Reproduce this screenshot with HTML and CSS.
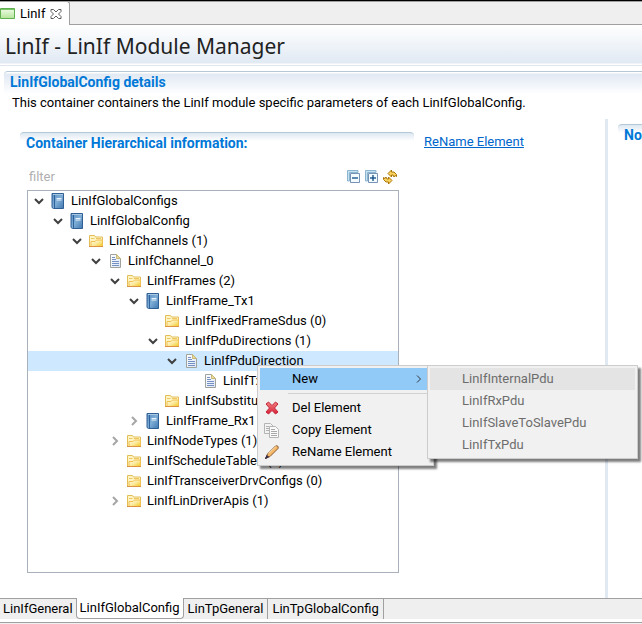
FILE: index.html
```html
<!DOCTYPE html>
<html lang="en">
<head>
<meta charset="utf-8">
<title>LinIf - LinIf Module Manager</title>
<link rel="stylesheet" href="styles.css">
</head>
<body>
<svg class="sprite" aria-hidden="true">
  <defs>
    <linearGradient id="g-folder" x1="0" y1="0" x2="1" y2="1"><stop offset="0" stop-color="#fffbe0"/><stop offset=".5" stop-color="#fbeaa0"/><stop offset="1" stop-color="#f2c61c"/></linearGradient>
    <linearGradient id="g-book" x1="0" y1="0" x2="1" y2="1"><stop offset="0" stop-color="#5b90c4"/><stop offset=".5" stop-color="#7fadd6"/><stop offset="1" stop-color="#3f78b0"/></linearGradient>
    <linearGradient id="g-page" x1="0" y1="0" x2="1" y2="1"><stop offset="0" stop-color="#ffffff"/><stop offset="1" stop-color="#dce6f6"/></linearGradient>
    <linearGradient id="g-green" x1="0" y1="0" x2="0" y2="1"><stop offset="0" stop-color="#f0fbe8"/><stop offset="1" stop-color="#b4e69a"/></linearGradient>
    <linearGradient id="g-red" x1="0" y1="0" x2="0" y2="1"><stop offset="0" stop-color="#f08080"/><stop offset="1" stop-color="#d8203a"/></linearGradient>
  </defs>
  <symbol id="book" viewBox="0 0 16 16">
    <path d="M2 .5h11.500v15H3.500L2 14.500z" fill="url(#g-book)" stroke="#2f5f94"/>
    <path d="M4.500 1v14" stroke="#2d629b" fill="none"/>
    <path d="M3 1.500h10" stroke="#a9c8e4" fill="none"/>
    <path d="M6.500 5.500h5M6.500 7h5" stroke="#e8f2fb" fill="none"/>
  </symbol>
  <symbol id="folder" viewBox="0 0 16 16">
    <path d="M1.500 13.500v-11h5l1 1.500h7v9.500z" fill="#fff4c4" stroke="#e3bd58"/>
    <path d="M3 5.500h3.500M8 5.500h5" stroke="#edc766" fill="none"/>
    <path d="M3 13.500V8.500h4L8.500 7h6v6.500z" fill="url(#g-folder)" stroke="#f0c050"/>
    <path d="M1 13.500h14" stroke="#dd9340" fill="none"/>
  </symbol>
  <symbol id="page" viewBox="0 0 16 16">
    <path d="M3.500 1.500h6l4 4v9h-10z" fill="url(#g-page)" stroke="#a0a39c"/>
    <path d="M9.500 1.500v4h4z" fill="#eadb9c" stroke="#c7b878"/>
    <path d="M5 4.500h3M5 6.500h4M5 8.500h7M5 10.500h7M5 12.500h7" stroke="#7590c2" fill="none"/>
  </symbol>
  <symbol id="open" viewBox="0 0 12 12"><path d="M2 4l4 4 4-4" fill="none" stroke="#404040" stroke-width="2"/></symbol>
  <symbol id="closed" viewBox="0 0 12 12"><path d="M4 2l4 4-4 4" fill="none" stroke="#a6a6a6" stroke-width="2"/></symbol>
  <symbol id="collapse" viewBox="0 0 14 14">
    <path d="M.5 11V.5H11V2.500H2.500V11z" fill="#c6e3f4" stroke="#8db4cf"/>
    <path d="M3.500 3.500h9v9h-9z" fill="#f4fbff" stroke="#7793b6"/><path d="M5 8h6" stroke="#0c4a86" stroke-width="1.300"/>
  </symbol>
</svg>

<header class="editor-tabs">
  <div class="editor-tab">
    <svg class="editor-icon" viewBox="0 0 15 11" aria-hidden="true"><path d="M.5 .5h14v10H.5z" fill="url(#g-green)" stroke="#5fb04e"/><path d="M1 1.500h13" stroke="#7cc46a"/></svg>
    <span>LinIf</span>
    <button class="close" aria-label="Close LinIf"><svg viewBox="0 0 12 12"><path d="M1 1.500h2.500L6 4l2.500-2.500H11v2L8.500 6 11 8.500v2H8.500L6 8l-2.500 2.500H1v-2L3.500 6 1 3.500z" fill="#fff" stroke="#5e5e5e"/></svg></button>
  </div>
</header>

<div class="title-bar"><h1>LinIf - LinIf Module Manager</h1></div>

<section class="details">
  <h2>LinIfGlobalConfig details</h2>
  <p>This container containers the LinIf module specific parameters of each LinIfGlobalConfig.</p>
</section>

<main class="workspace">
  <div class="pane">
    <section class="hierarchy">
      <div class="section-head"><h2>Container Hierarchical information:</h2></div>
      <div class="tools">
        <input type="text" placeholder="filter" aria-label="filter">
        <button aria-label="Collapse all"><svg viewBox="0 0 14 14"><use href="#collapse"/></svg></button>
        <button aria-label="Expand all"><svg viewBox="0 0 14 14"><use href="#collapse"/><path d="M8 5v6" stroke="#0c4a86" stroke-width="1.300"/></svg></button>
        <button aria-label="Refresh"><svg viewBox="0 0 14 14"><path d="M5 3.500L8.500 0v2H11l2.500 2.500v2L12 5.500 11 7 10 5H8.500v2z" fill="#f8d25c" stroke="#a97408" stroke-linejoin="round"/><path d="M9 10.500L5.500 14v-2H3L.5 9.500v-2L2 8.500 3 7l1 2h1.500V7z" fill="#f8d25c" stroke="#a97408" stroke-linejoin="round"/></svg></button>
      </div>
      <ul class="tree">
        <li class="level-0"><button class="twist" aria-label="Collapse"><svg><use href="#open"/></svg></button><svg class="icon"><use href="#book"/></svg><span>LinIfGlobalConfigs</span></li>
        <li class="level-1"><button class="twist" aria-label="Collapse"><svg><use href="#open"/></svg></button><svg class="icon"><use href="#book"/></svg><span>LinIfGlobalConfig</span></li>
        <li class="level-2"><button class="twist" aria-label="Collapse"><svg><use href="#open"/></svg></button><svg class="icon"><use href="#folder"/></svg><span>LinIfChannels (1)</span></li>
        <li class="level-3"><button class="twist" aria-label="Collapse"><svg><use href="#open"/></svg></button><svg class="icon"><use href="#page"/></svg><span>LinIfChannel_0</span></li>
        <li class="level-4"><button class="twist" aria-label="Collapse"><svg><use href="#open"/></svg></button><svg class="icon"><use href="#folder"/></svg><span>LinIfFrames (2)</span></li>
        <li class="level-5"><button class="twist" aria-label="Collapse"><svg><use href="#open"/></svg></button><svg class="icon"><use href="#book"/></svg><span>LinIfFrame_Tx1</span></li>
        <li class="level-6 leaf"><svg class="icon"><use href="#folder"/></svg><span>LinIfFixedFrameSdus (0)</span></li>
        <li class="level-6"><button class="twist" aria-label="Collapse"><svg><use href="#open"/></svg></button><svg class="icon"><use href="#folder"/></svg><span>LinIfPduDirections (1)</span></li>
        <li class="level-7 selected"><button class="twist" aria-label="Collapse"><svg><use href="#open"/></svg></button><svg class="icon"><use href="#page"/></svg><span>LinIfPduDirection</span></li>
        <li class="level-8 leaf"><svg class="icon"><use href="#page"/></svg><span>LinIfTxPdu</span></li>
        <li class="level-6 leaf"><svg class="icon"><use href="#folder"/></svg><span>LinIfSubstitut</span></li>
        <li class="level-5"><button class="twist" aria-label="Expand"><svg><use href="#closed"/></svg></button><svg class="icon"><use href="#book"/></svg><span>LinIfFrame_Rx1</span></li>
        <li class="level-4"><button class="twist" aria-label="Expand"><svg><use href="#closed"/></svg></button><svg class="icon"><use href="#folder"/></svg><span>LinIfNodeTypes (1)</span></li>
        <li class="level-4 leaf"><svg class="icon"><use href="#folder"/></svg><span>LinIfScheduleTables (0)</span></li>
        <li class="level-4 leaf"><svg class="icon"><use href="#folder"/></svg><span>LinIfTransceiverDrvConfigs (0)</span></li>
        <li class="level-4"><button class="twist" aria-label="Expand"><svg><use href="#closed"/></svg></button><svg class="icon"><use href="#folder"/></svg><span>LinIfLinDriverApis (1)</span></li>
      </ul>
    </section>
    <nav class="actions"><a href="#rename">ReName Element</a></nav>
  </div>
  <div class="sash"></div>
  <section class="side"><div class="section-head"><h2>No</h2></div></section>
</main>

<footer class="page-tabs">
  <div class="tab-row">
    <button>LinIfGeneral</button>
    <button class="active">LinIfGlobalConfig</button>
    <button>LinTpGeneral</button>
    <button>LinTpGlobalConfig</button>
  </div>
</footer>

<div class="menu context-menu">
  <button class="current"><span></span><span>New</span><svg class="arrow" viewBox="0 0 6 10"><path d="M1 1.500L4.500 5 1 8.500" fill="none" stroke="#303840"/></svg></button>
  <hr>
  <button><svg viewBox="0 0 16 16"><path d="M2 4l2.500-2L8 5.500 11.500 2 14 4l-3.500 4 3.500 4-2.500 2L8 10.500 4.500 14 2 12l3.500-4z" fill="url(#g-red)" stroke="#c32638" stroke-linejoin="round"/></svg><span>Del Element</span></button>
  <button><svg viewBox="0 0 16 16"><path d="M.5 1.500h6l3 3v7h-9z" fill="#f3f3f3" stroke="#b4b4b4"/><path d="M2 4.500h3M2 6.500h3M2 8.500h3" stroke="#b0b0b0"/><path d="M5.500 4.500h6l3 3v8h-9z" fill="#fafafa" stroke="#b4b4b4"/><path d="M7 7.500h4M7 9.500h6M7 11.500h6M7 13.500h6" stroke="#a8a8a8"/></svg><span>Copy Element</span></button>
  <button><svg viewBox="0 0 16 16"><path d="M1.500 14.500l2-4.500L11.500 2c1.500-1 3.500.5 2.500 2.500L6 12.500z" fill="#f4b765" stroke="#8a5a32" stroke-linejoin="round"/><path d="M4.500 9.500L12 2.500" stroke="#fde0ae"/><path d="M1.500 14.500l1.500-3 1.500 1.500z" fill="#342c4a" stroke="#342c4a"/></svg><span>ReName Element</span></button>
</div>
<div class="menu sub-menu">
  <button class="current"><span></span><span>LinIfInternalPdu</span></button>
  <button><span></span><span>LinIfRxPdu</span></button>
  <button><span></span><span>LinIfSlaveToSlavePdu</span></button>
  <button><span></span><span>LinIfTxPdu</span></button>
</div>
</body>
</html>
```
FILE: styles.css
```css
* { box-sizing: border-box; }

body {
  position: relative;
  display: flex;
  flex-direction: column;
  min-height: 100vh;
  margin: 0;
  overflow: hidden;
  background: #fff;
  color: #000;
  font: 13px/20px Roboto, sans-serif;
}

h1, h2, p, ul { margin: 0; padding: 0; }
button { padding: 0; border: 0; background: none; color: inherit; font: inherit; }
svg { display: block; flex: none; }
.sprite { position: absolute; width: 0; height: 0; }

h2 { color: #0078d7; font: 700 14px/20px Roboto, sans-serif; }

/* editor tab strip */
.editor-tabs {
  height: 25px;
  border-top: 1px solid #000;
  border-bottom: 1px solid #a0a0a0;
  background: #efefef;
  box-shadow: inset 0 1px #a0a0a0;
}
.editor-tab {
  display: flex;
  align-items: center;
  gap: 5px;
  width: 70px;
  height: 24px;
  border-top: 1px solid #a0a0a0;
  border-right: 1px solid #a0a0a0;
  border-radius: 0 3px 0 0;
  background: #fff;
}
.editor-icon { width: 15px; height: 11px; }
.close svg { width: 12px; height: 12px; }

.title-bar {
  height: 41px;
  padding: 7px 5px;
  border-bottom: 1px solid #dfe5ee;
  background: linear-gradient(#fff, #e1e9f3 38px, #fff 39px);
}
h1 { color: #222; font: 400 21px/28px "Noto Sans", sans-serif; }

.details {
  margin: 5px 0 0 4px;
  padding-left: 6px;
  border-top: 1px solid #b4c8d8;
  border-radius: 4px 0 0 0;
  background: linear-gradient(#fff 1px, #e1e9f3 2px, #fff 22px);
}
.details p { padding: 1px 0 0 2px; white-space: nowrap; }

/* panes */
.workspace {
  display: grid;
  flex: 1;
  grid-template-columns: 605fr 3px 34fr;
  margin-top: 6px;
}
.pane { display: flex; padding: 13px 0 25px 20px; }
.sash { background: #e0e8f2; }
.side { padding: 5px 0 0 10px; overflow: hidden; }
.side .section-head { border-radius: 4px 0 0 0; }
.section-head {
  padding-left: 6px;
  border-top: 1px solid #b4c8d8;
  border-radius: 4px 4px 0 0;
  background: linear-gradient(#dde7f1, #fff 8px);
}
.hierarchy { display: flex; flex: 1; flex-direction: column; }
.actions { width: 191px; padding-left: 10px; }
.actions a { color: #0066cc; }

.tools {
  display: flex;
  align-items: center;
  gap: 4px;
  margin: 15px 17px 4px 7px;
}
.tools input {
  flex: 1;
  min-width: 0;
  height: 18px;
  padding: 0 2px;
  border: 0;
  background: none;
  font: inherit;
}
.tools input::placeholder { color: #b0b0b0; }
.tools svg { width: 14px; height: 14px; }

.tree {
  flex: 1;
  margin: 0 15px 0 7px;
  border: 1px solid #a8b0bb;
  list-style: none;
}
.tree li { display: flex; align-items: center; height: 20px; white-space: nowrap; }
.tree .leaf { border-left: 17px solid transparent; }
.tree .selected { background: #cde8ff; }
.twist { width: 12px; margin-right: 5px; }
.twist svg { width: 12px; height: 12px; }
.icon { width: 16px; height: 16px; margin-right: 5px; }
.level-0 { padding-left: 5px; }
.level-1 { padding-left: 24px; }
.level-2 { padding-left: 43px; }
.level-3 { padding-left: 62px; }
.level-4 { padding-left: 81px; }
.level-5 { padding-left: 100px; }
.level-6 { padding-left: 119px; }
.level-7 { padding-left: 138px; }
.level-8 { padding-left: 157px; }

/* bottom page tabs */
.page-tabs { border-bottom: 1px solid #f0f0f0; }
.tab-row {
  display: flex;
  height: 25px;
  border-bottom: 1px solid #a0a0a0;
  background: linear-gradient(#a0a0a0 1px, #efefef 1px, #efefef 21px, #fff 21px);
}
.tab-row button { height: 21px; padding: 0 4px; border-right: 1px solid #a0a0a0; }
.tab-row .active {
  padding: 0 3px;
  border-bottom: 1px solid #a0a0a0;
  border-left: 1px solid #a0a0a0;
  border-radius: 0 0 4px 4px;
  background: #fff;
}
.tab-row button:first-child { padding: 0 3px; border-right: 0; }

/* popup menus */
.menu {
  position: absolute;
  padding: 2px;
  border: 1px solid #ccc;
  background: #f1f1f1;
  box-shadow: 3px 3px 2px #00000080;
}
.context-menu { top: 365px; left: 257px; width: 177px; }
.sub-menu { top: 365px; left: 427px; width: 211px; color: #6d6d6d; }
.menu button {
  display: grid;
  grid-template-columns: 16px 1fr auto;
  align-items: center;
  gap: 12px;
  width: 100%;
  height: 22px;
  padding: 0 9px 0 4px;
  text-align: left;
}
.menu svg { width: 16px; height: 16px; }
.menu .arrow { width: 6px; height: 10px; }
.menu hr { height: 1px; margin: 3px 0 3px 28px; border: 0; background: #d2d2d2; }
.context-menu .current { background: #91c9f7; }
.sub-menu .current { background: #e4e4e4; }
```
